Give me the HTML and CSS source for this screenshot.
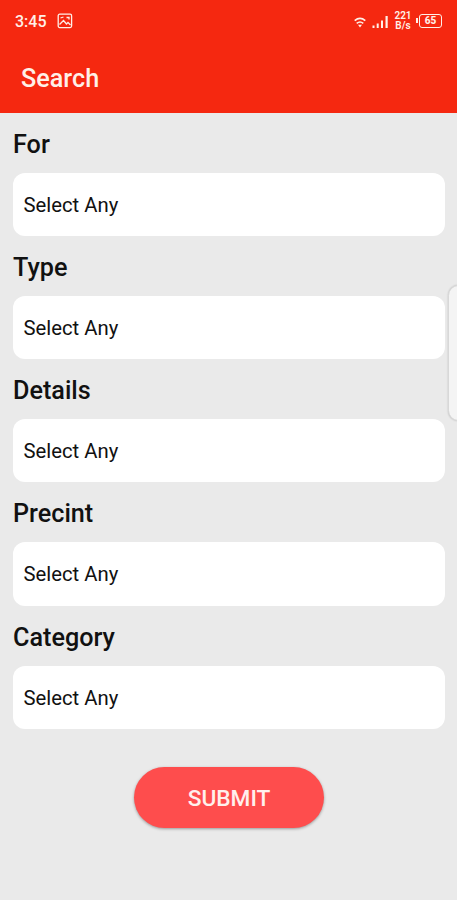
FILE: index.html
```
<!DOCTYPE html>
<html lang="en">
<head>
  <meta charset="UTF-8">
  <meta name="viewport" content="width=device-width, initial-scale=1.0">
  <title>Search</title>
  <link rel="stylesheet" href="styles.css">
</head>
<body>
  <header class="header">
    <div class="status">
      <span class="time">3:45</span>
      <svg class="picture" width="16" height="16" viewBox="0 0 16 16" fill="none" stroke="currentColor" stroke-width="1.3">
        <rect x="1.2" y="1.2" width="13.4" height="13.4" rx="1.5"/>
        <path d="M3.5 5l3-1M9.5 4.5h2.5v2"/>
        <path d="M2.5 11.5l4-4 3 3.5 1.5-1.5 2.5 2.5"/>
      </svg>
      <div class="indicators">
        <svg class="wifi" width="12" height="11" viewBox="0 0 12 11" fill="none" stroke="currentColor" stroke-width="1.7">
          <path d="M.7 3.6q5.3-4.4 10.6 0M2.7 6.3q3.3-2.6 6.6 0"/>
          <path d="M4 7.8h4L6 10.4z" fill="currentColor" stroke="none"/>
        </svg>
        <svg class="signal" width="17" height="13" viewBox="0 0 17 13" fill="currentColor">
          <path d="M.5 10.5h2V13h-2zM4.7 8.5h2V13h-2zM9 5.5h2V13H9zM13.5 1h2.2v12h-2.2z"/>
        </svg>
        <span class="speed">221<br>B/s</span>
        <span class="battery">65</span>
      </div>
    </div>
    <h1>Search</h1>
  </header>
  <form class="search">
    <label>For</label>
    <div class="select">Select Any</div>
    <label>Type</label>
    <div class="select">Select Any</div>
    <label>Details</label>
    <div class="select">Select Any</div>
    <label>Precint</label>
    <div class="select">Select Any</div>
    <label>Category</label>
    <div class="select">Select Any</div>
    <button type="button" class="submit">SUBMIT</button>
  </form>
  <div class="edge-panel"></div>
</body>
</html>
```
FILE: styles.css
```
*, ::before, ::after {
  box-sizing: border-box;
}
body {
  position: relative;
  height: 900px;
  margin: 0;
  overflow: hidden;
  font-family: Roboto, sans-serif;
  color: #111;
  background: #eaeaea;
}
.header {
  height: 112.5px;
  color: #fff0e8;
  background: #f52810;
}
.status {
  display: flex;
  align-items: center;
  height: 42px;
  padding: 0 15px;
}
.time {
  width: 42px;
  font-size: 16px;
  font-weight: 500;
}
.indicators {
  display: flex;
  align-items: center;
  margin-left: auto;
}
.wifi {
  margin: 2px 6px 0 0;
}
.signal {
  margin-right: 5px;
}
.speed {
  width: 18px;
  margin-right: 7px;
  font-size: 10px;
  font-weight: 600;
  line-height: 10px;
  text-align: center;
}
.battery {
  position: relative;
  width: 23px;
  height: 14px;
  font-size: 10px;
  font-weight: 800;
  line-height: 11px;
  text-align: center;
  border: 1.5px solid;
  border-radius: 3px;
}
.battery::before {
  content: "";
  position: absolute;
  top: 3px;
  left: -4px;
  width: 2px;
  height: 5px;
  background: currentColor;
}
h1 {
  margin: 0;
  padding: 21px 21px 0;
  font-size: 25.2px;
  font-weight: 500;
  line-height: 32px;
}
.search {
  display: flex;
  flex-direction: column;
  padding: 0 12px 0 13px;
}
label {
  height: 60px;
  padding-top: 16px;
  font-size: 25.2px;
  font-weight: 500;
  line-height: 32px;
}
.select {
  height: 63.3px;
  padding-left: 10.5px;
  font-size: 20.3px;
  line-height: 65px;
  background: #fff;
  border-radius: 12px;
}
.submit {
  align-self: center;
  width: 190px;
  height: 61px;
  margin-top: 38px;
  padding: 3px 0 0;
  font: 500 22.7px Roboto, sans-serif;
  color: #fff0ec;
  background: #fe4d4d;
  border: 0;
  border-radius: 31px;
  box-shadow: 0 1px 3px rgba(0, 0, 0, .35);
}
.edge-panel {
  position: absolute;
  top: 285px;
  right: -12px;
  width: 21px;
  height: 136px;
  background: #f4f4f4;
  border: 1px solid #d8d8d8;
  border-radius: 12px;
  box-shadow: 0 0 2px rgba(0, 0, 0, .2);
}
```
